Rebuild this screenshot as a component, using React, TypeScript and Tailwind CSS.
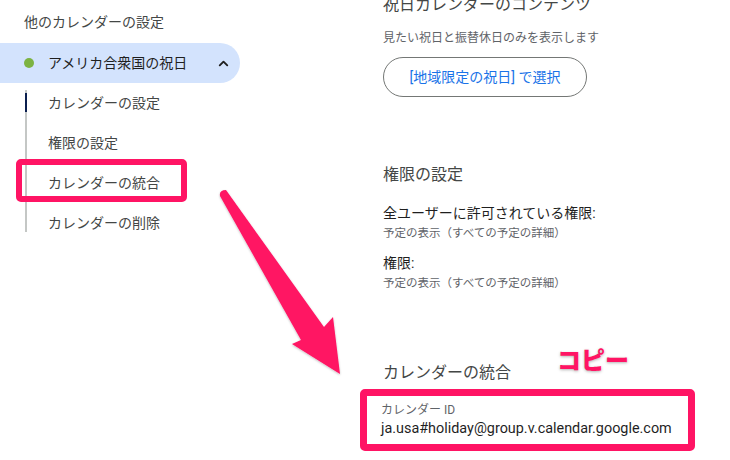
import { ChevronUp } from "lucide-react";

const FONT = "font-['Roboto','Noto_Sans_CJK_JP',sans-serif]";

const subItems = ["カレンダーの設定", "権限の設定", "カレンダーの統合", "カレンダーの削除"];

function Sidebar() {
  return <aside className="w-[240px] shrink-0">
    <p className="h-[43px] pl-6 pt-[12px] text-[14px] leading-[20px] text-[#444746]">他のカレンダーの設定</p>

    <div className="flex h-[40px] items-center rounded-r-full bg-[#d3e3fd] pl-[24px] pr-[9px]">
      <span className="size-[10px] rounded-full bg-[#7cb342]" />
      <span className="ml-[14px] text-[14px] text-[#1f1f1f]">アメリカ合衆国の祝日</span>
      <ChevronUp size={15} strokeWidth={3} className="ml-auto text-[#1f1f1f]" />
    </div>

    <div className="relative">
      <span className="absolute left-[25px] top-[7px] bottom-[11px] w-[2px] bg-[#c4c7c5]" />
      <span className="absolute left-[25px] top-[10px] h-[19px] w-[2px] bg-[#0b1f4f]" />
      {subItems.map((label) => <div key={label} className="relative flex h-[40px] items-center pl-[48px] text-[14px] text-[#444746]">
        {label}
        {label === "カレンダーの統合" && <span className="absolute left-[16px] top-[-4px] h-[43px] w-[171px] rounded-[5px] border-[6px] border-[#ff1464]" />}
      </div>)}
    </div>
  </aside>;
}

function Content() {
  return <main className="ml-[143px] flex flex-col items-start">
    <h2 className="mt-[-7px] text-[16px] leading-[24px] text-[#444746]">祝日カレンダーのコンテンツ</h2>
    <p className="mt-[13px] text-[12px] leading-[16px] text-[#5f6368]">見たい祝日と振替休日のみを表示します</p>
    <button type="button" className="mt-[11px] h-[40px] w-[204px] rounded-full border border-[#747775] text-[14px] text-[#1a73e8]">
      [地域限定の祝日] で選択
    </button>

    <h2 className="mt-[66px] text-[16px] leading-[24px] text-[#444746]">権限の設定</h2>
    <p className="mt-[16px] text-[14px] leading-[20px] text-[#1f1f1f]">全ユーザーに許可されている権限:</p>
    <p className="mt-[2px] text-[11.5px] leading-[16px] text-[#5f6368]">予定の表示（すべての予定の詳細）</p>
    <p className="mt-[12px] text-[14px] leading-[20px] text-[#1f1f1f]">権限:</p>
    <p className="mt-[2px] text-[11.5px] leading-[16px] text-[#5f6368]">予定の表示（すべての予定の詳細）</p>

    <h2 className="mt-[70px] text-[16px] leading-[24px] text-[#444746]">カレンダーの統合</h2>
    {/* the red frame is the screenshot's annotation around the ID field */}
    <div className="ml-[-23px] mt-[4px] h-[62px] w-[335px] rounded-[5px] border-[7px] border-[#ff1464] pl-[14px] pt-[6px]">
      <p className="text-[12px] leading-[16px] text-[#5f6368]">カレンダー ID</p>
      <p className="mt-[1px] text-[14.4px] leading-[20px] text-[#1f1f1f]">ja.usa#holiday@group.v.calendar.google.com</p>
    </div>
  </main>;
}

export default function App() {
  return <div className={`relative h-[460px] w-[730px] overflow-hidden bg-white ${FONT}`}>
    <div className="flex">
      <Sidebar />
      <Content />
    </div>

    <svg className="pointer-events-none absolute inset-0" width="730" height="460" viewBox="0 0 730 460">
      <defs>
        <filter id="arrow-shadow" x="-20%" y="-20%" width="140%" height="140%">
          <feDropShadow dx="0" dy="1" stdDeviation="1.2" floodColor="#000" floodOpacity="0.25" />
        </filter>
      </defs>
      <path
        d="M220 196 Q219 190 226 190 L324 327 L333 317 L340 374 L292 344 L301 340 Z"
        fill="#ff1464"
        filter="url(#arrow-shadow)"
      />
    </svg>

    <span className="absolute left-[557px] top-[346px] text-[24px] font-black leading-[30px] text-[#ff1464] [text-shadow:0_1px_3px_rgba(0,0,0,0.3)]">コピー</span>
  </div>;
}
